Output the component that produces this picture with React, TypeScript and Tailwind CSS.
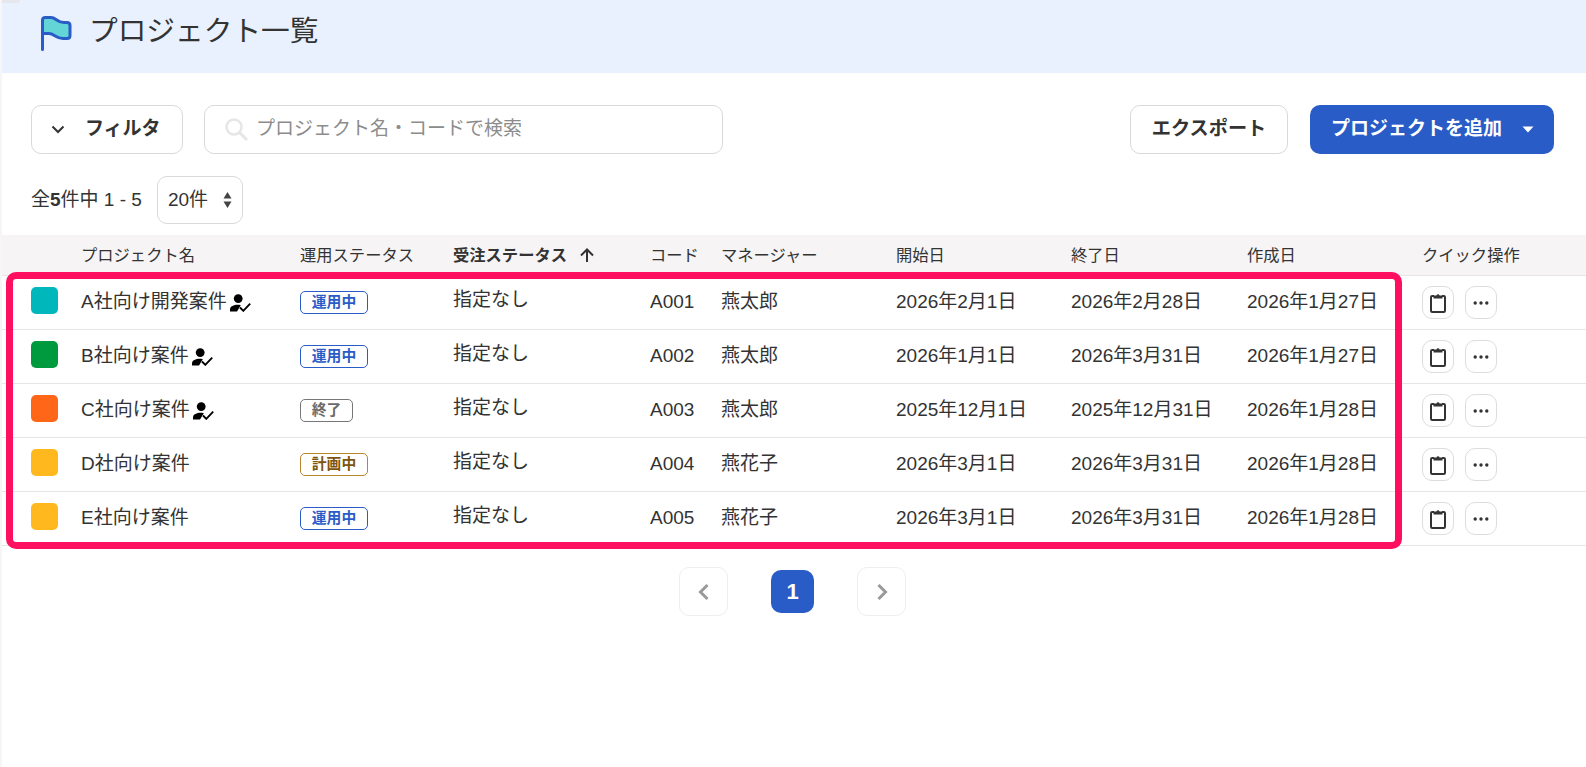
import React from "react";

const FONT = "font-['Liberation_Sans','Noto_Sans_CJK_JP',sans-serif]";
const COLS = "grid grid-cols-[81px_219px_153px_197px_71px_175px_175px_176px_175px_1fr]";

type Row = { color: string; name: string; me: boolean; status: "run" | "end" | "plan"; code: string; mgr: string; start: string; end: string; created: string };

const rows: Row[] = [
  { color: "bg-[#00b8bc]", name: "A社向け開発案件", me: true, status: "run", code: "A001", mgr: "燕太郎", start: "2026年2月1日", end: "2026年2月28日", created: "2026年1月27日" },
  { color: "bg-[#009a3e]", name: "B社向け案件", me: true, status: "run", code: "A002", mgr: "燕太郎", start: "2026年1月1日", end: "2026年3月31日", created: "2026年1月27日" },
  { color: "bg-[#ff6618]", name: "C社向け案件", me: true, status: "end", code: "A003", mgr: "燕太郎", start: "2025年12月1日", end: "2025年12月31日", created: "2026年1月28日" },
  { color: "bg-[#ffb91f]", name: "D社向け案件", me: false, status: "plan", code: "A004", mgr: "燕花子", start: "2026年3月1日", end: "2026年3月31日", created: "2026年1月28日" },
  { color: "bg-[#ffb91f]", name: "E社向け案件", me: false, status: "run", code: "A005", mgr: "燕花子", start: "2026年3月1日", end: "2026年3月31日", created: "2026年1月28日" },
];

function Badge({ status }: { status: Row["status"] }) {
  if (status === "run")
    return <span className="flex h-[23px] w-[68px] items-center justify-center rounded-[5px] border border-[#2a5cc7] text-[14.8px] font-bold text-[#2a5cc7]">運用中</span>;
  if (status === "end")
    return <span className="flex h-[23px] w-[53px] items-center justify-center rounded-[5px] border border-[#777777] text-[14.8px] font-bold text-[#6b6b6b]">終了</span>;
  return <span className="flex h-[23px] w-[68px] items-center justify-center rounded-[5px] border border-[#b8862b] text-[14.8px] font-bold text-[#7d5510]">計画中</span>;
}

function PersonCheck() {
  return (
    <svg width="21" height="18" viewBox="0 0 21 18" className="ml-[3px] shrink-0" fill="#000">
      <circle cx="8.2" cy="4.6" r="4.4" />
      <path d="M0 17.500v-2.300c0-2.700 3.800-4.400 7.600-4.400 1.100 0 2.200.1 3.200.4l-3.800 6.300z" />
      <path d="M10 13.500l3.300 3.300L20.200 9.600" fill="none" stroke="#000" strokeWidth="1.900" />
    </svg>
  );
}

function Clipboard() {
  return (
    <svg width="18" height="20" viewBox="0 0 18 20" fill="none">
      <path d="M5 3H3.200A1.200 1.200 0 0 0 2 4.200v13.600a1.200 1.200 0 0 0 1.200 1.200h11.600a1.200 1.200 0 0 0 1.200-1.200V4.200A1.200 1.200 0 0 0 14.800 3H13" stroke="#333" strokeWidth="2" />
      <path d="M4.500 5.500V2.500h2.900a1.700 1.700 0 0 1 3.200 0h2.900v3z" fill="#333" />
    </svg>
  );
}

function Dots() {
  return (
    <svg width="16" height="4" viewBox="0 0 16 4" fill="#333">
      <circle cx="2.200" cy="2" r="1.700" />
      <circle cx="8" cy="2" r="1.700" />
      <circle cx="13.800" cy="2" r="1.700" />
    </svg>
  );
}

export default function App() {
  return (
    <div className={`${FONT} relative h-[767px] overflow-hidden bg-white text-[#333333]`}>
      <header className="flex h-[73px] items-center bg-[#e8f1fd] pb-[7px] pl-[41px]">
        <svg width="31" height="35" viewBox="0 0 31 35" fill="none">
          <path d="M1.500 4C1.500 2 2.500 1.500 4.500 1.500H10C15 1.500 16 6.500 23 6.500H26C28 6.500 29 7.500 29 9.500V19.500C29 21.500 28 22.500 26 22.500H22C15 22.500 13 17.500 8 17.500H1.500z" fill="#63d5d6" />
          <path d="M1.500 33.500V4C1.500 2 2.500 1.500 4.500 1.500H10C15 1.500 16 6.500 23 6.500H26C28 6.500 29 7.500 29 9.500V19.500C29 21.500 28 22.500 26 22.500H22C15 22.500 13 17.500 8 17.500H1.500" stroke="#2a5cc7" strokeWidth="3" strokeLinecap="round" strokeLinejoin="round" />
        </svg>
        <h1 className="mb-[3px] ml-[17px] text-[28.700px] font-normal leading-none">プロジェクト一覧</h1>
      </header>

      <div className="mt-[32px] flex h-[49px] pl-[31px] pr-[32px]">
        <button className="flex w-[152px] items-center rounded-[10px] border border-[#d9d9d9] bg-white pl-[19px] text-[19px] font-bold">
          <svg width="14" height="9" viewBox="0 0 14 9" fill="none"><path d="M1.500 1.500 7 7l5.500-5.500" stroke="#333" strokeWidth="2" /></svg>
          <span className="ml-[20px]">フィルタ</span>
        </button>
        <div className="ml-[21px] flex w-[519px] items-center rounded-[10px] border border-[#d9d9d9] bg-white pl-[19px]">
          <svg width="25" height="25" viewBox="0 0 25 25" fill="none">
            <circle cx="10" cy="10" r="7.500" stroke="#e6e6e6" strokeWidth="2.500" />
            <path d="M15.500 15.500 23 23" stroke="#e6e6e6" strokeWidth="3" />
          </svg>
          <span className="ml-[7px] text-[19px] text-[#8c8c8c]">プロジェクト名・コードで検索</span>
        </div>
        <button className="ml-auto w-[158px] rounded-[10px] border border-[#d9d9d9] bg-white text-[19.200px] font-bold">エクスポート</button>
        <button className="ml-[22px] flex w-[244px] items-center rounded-[10px] bg-[#2a5cc7] pl-[21px] text-[19px] font-bold text-white">
          <span>プロジェクトを追加</span>
          <svg width="12" height="7" viewBox="0 0 12 7" fill="#fff" className="ml-[20px]"><path d="M0.500 0.500h11L6 6.500z" /></svg>
        </button>
      </div>

      <div className="mt-[22px] flex h-[48px] items-center pl-[31px] text-[19px]">
        <span>全<b className="font-bold">5</b>件中 1 - 5</span>
        <div className="ml-[15px] flex h-[48px] w-[86px] items-center rounded-[10px] border border-[#d9d9d9] pl-[10px]">
          <span>20件</span>
          <svg width="9" height="16" viewBox="0 0 9 16" fill="#444" className="ml-[15px]"><path d="M4.500 0 8.500 6.500H.500zM4.500 16 .500 9.500h8z" /></svg>
        </div>
      </div>

      <div className={`${COLS} mt-[11px] h-[41px] items-center border-b border-[#e6e6e6] bg-[#f6f4f5] text-[16.300px]`}>
        <div />
        <div>プロジェクト名</div>
        <div>運用ステータス</div>
        <div className="flex items-center font-bold">
          <span>受注ステータス</span>
          <svg width="14" height="14" viewBox="0 0 14 14" fill="none" className="ml-[13px]"><path d="M7 14V1.500M1 7.500 7 1.500l6 6" stroke="#333" strokeWidth="2" /></svg>
        </div>
        <div>コード</div>
        <div>マネージャー</div>
        <div>開始日</div>
        <div>終了日</div>
        <div>作成日</div>
        <div>クイック操作</div>
      </div>

      {rows.map((r) => (
        <div key={r.code} className={`${COLS} h-[54px] items-center border-b border-[#e6e6e6] text-[19px]`}>
          <div className="pb-[5px] pl-[31px]"><div className={`h-[27px] w-[27px] rounded-[5px] ${r.color}`} /></div>
          <div className="flex items-center">
            <span>{r.name}</span>
            {r.me && <PersonCheck />}
          </div>
          <div><Badge status={r.status} /></div>
          <div className="pb-[4px]">指定なし</div>
          <div>{r.code}</div>
          <div>{r.mgr}</div>
          <div>{r.start}</div>
          <div>{r.end}</div>
          <div>{r.created}</div>
          <div className="flex gap-[11px]">
            <button className="flex h-[33px] w-[32px] items-center justify-center rounded-[10px] border border-[#dddddd] bg-white"><Clipboard /></button>
            <button className="flex h-[33px] w-[32px] items-center justify-center rounded-[10px] border border-[#dddddd] bg-white"><Dots /></button>
          </div>
        </div>
      ))}

      <div className="mt-[21px] flex items-center pl-[679px]">
        <button className="flex h-[49px] w-[49px] items-center justify-center rounded-[10px] border border-[#eeeeee] bg-white">
          <svg width="12" height="18" viewBox="0 0 12 18" fill="none"><path d="M9.500 2 2.500 9l7 7" stroke="#999" strokeWidth="3" /></svg>
        </button>
        <button className="ml-[43px] flex h-[43px] w-[43px] items-center justify-center rounded-[10px] bg-[#2a5cc7] text-[22px] font-bold text-white">1</button>
        <button className="ml-[43px] flex h-[49px] w-[49px] items-center justify-center rounded-[10px] border border-[#eeeeee] bg-white">
          <svg width="12" height="18" viewBox="0 0 12 18" fill="none"><path d="M2.500 2l7 7-7 7" stroke="#999" strokeWidth="3" /></svg>
        </button>
      </div>

      <div className="pointer-events-none absolute left-[6px] top-[272px] h-[277px] w-[1396px] rounded-[10px] border-[7px] border-[#ff0f5f]" />
      <div className="pointer-events-none absolute left-0 top-0 h-[3px] w-[20px] rounded-br-[3px] bg-[#e6e6ec]" />
      <div className="pointer-events-none absolute bottom-0 left-0 top-0 w-[2px] bg-[#f6f6f9]" />
    </div>
  );
}
